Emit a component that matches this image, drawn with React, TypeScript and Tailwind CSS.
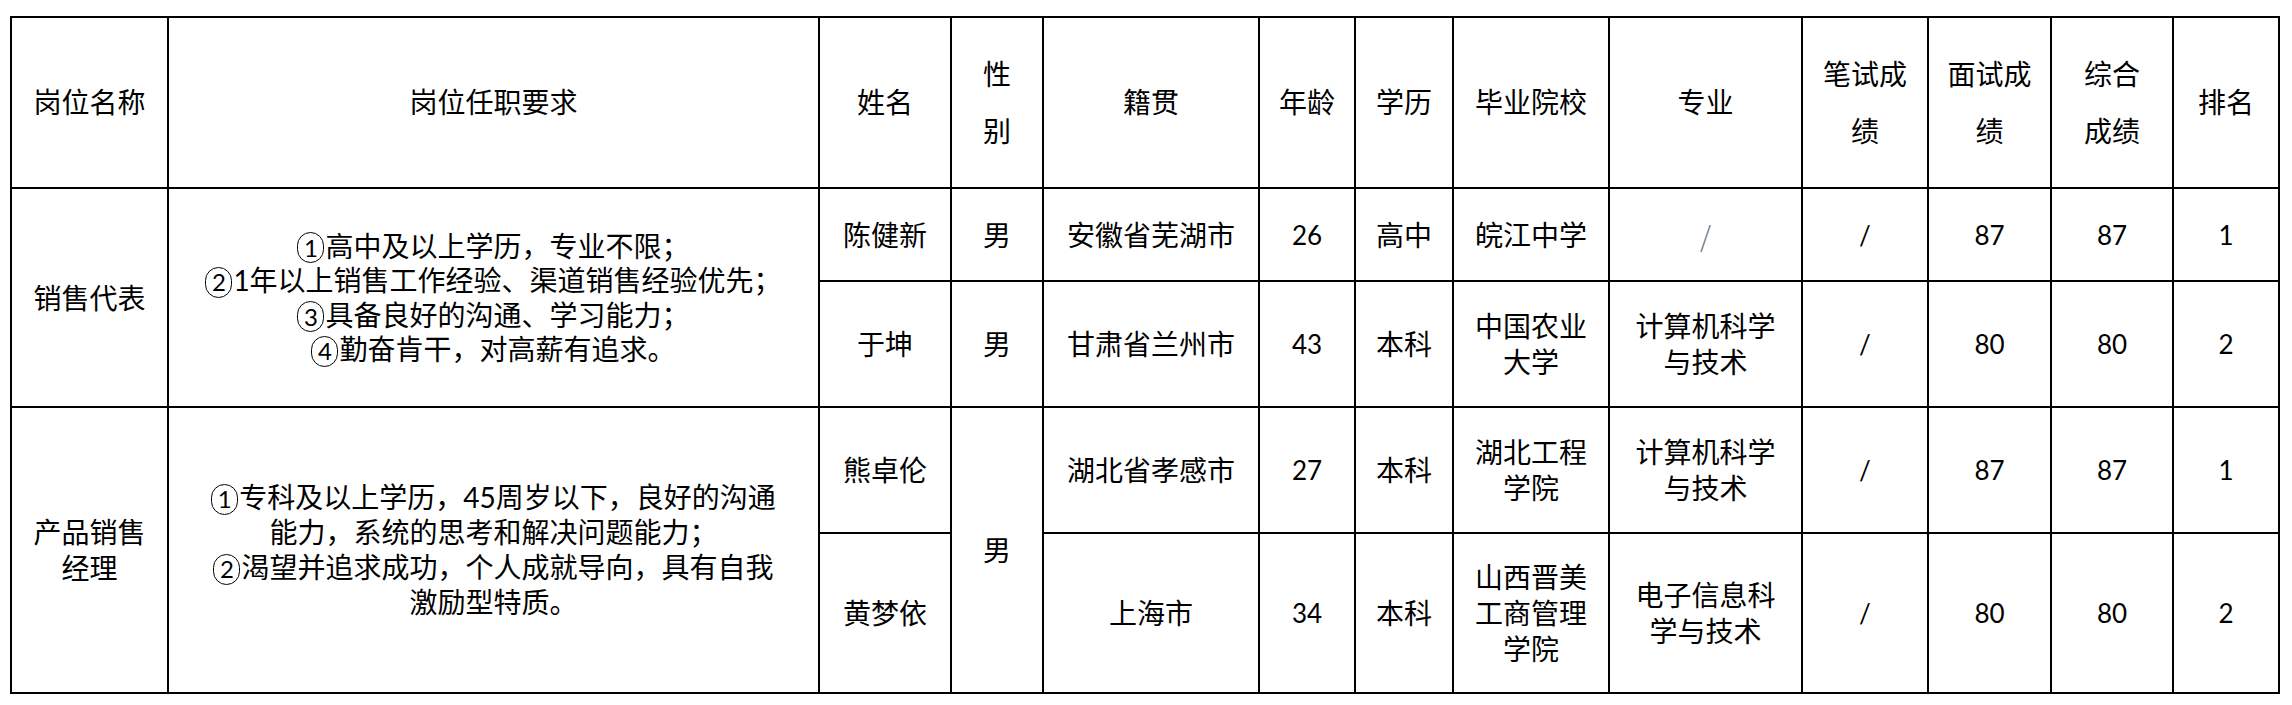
import React from 'react'

// 列宽（px），与原表一致
const colWidths = [157, 651, 132, 92, 216, 96, 98, 156, 193, 126, 123, 122, 106]

const base = "font-[Lato,'Noto_Sans_CJK_SC',sans-serif] text-black"

const circled: Record<string, string> = { '①': '1', '②': '2', '③': '3', '④': '4' }

// 带圈数字，原表里的圈比字体自带的大
function Circ({ n }: { n: string }) {
  return (
    <span className="inline-flex items-center justify-center w-[27px] h-[31px] mr-[1px] rounded-full border-[1.5px] border-black align-baseline text-[24px] leading-none">
      {n}
    </span>
  )
}

function Line({ text }: { text: string }) {
  const first = text.charAt(0)
  if (circled[first]) {
    return (
      <div className="whitespace-nowrap">
        <Circ n={circled[first]} />
        {text.slice(1)}
      </div>
    )
  }
  return <div className="whitespace-nowrap">{text}</div>
}

function Lines({ lines, leading = 'leading-[36px]' }: { lines: string[]; leading?: string }) {
  return (
    <div className={leading}>
      {lines.map((l, i) => (
        <Line key={i} text={l} />
      ))}
    </div>
  )
}

function Th({ lines }: { lines: string[] }) {
  return (
    <td className="border-2 border-black text-center align-middle p-0 text-[28px]">
      <Lines lines={lines} leading="leading-[57px]" />
    </td>
  )
}

function Td({ lines, rowSpan, num }: { lines: string[]; rowSpan?: number; num?: boolean }) {
  return (
    <td
      rowSpan={rowSpan}
      className={`border-2 border-black text-center align-middle p-0 ${num ? 'text-[26px]' : 'text-[28px]'}`}
    >
      <Lines lines={lines} />
    </td>
  )
}

export default function App() {
  return (
    <div className={`w-[2292px] h-[705px] bg-white pt-[16px] pl-[10px] ${base}`}>
      <table className="table-fixed border-collapse w-[2270px]">
        <colgroup>
          {colWidths.map((w, i) => (
            <col key={i} style={{ width: w }} />
          ))}
        </colgroup>
        <tbody>
          {/* 表头 */}
          <tr className="h-[171px]">
            <Th lines={['岗位名称']} />
            <Th lines={['岗位任职要求']} />
            <Th lines={['姓名']} />
            <Th lines={['性', '别']} />
            <Th lines={['籍贯']} />
            <Th lines={['年龄']} />
            <Th lines={['学历']} />
            <Th lines={['毕业院校']} />
            <Th lines={['专业']} />
            <Th lines={['笔试成', '绩']} />
            <Th lines={['面试成', '绩']} />
            <Th lines={['综合', '成绩']} />
            <Th lines={['排名']} />
          </tr>

          {/* 销售代表 */}
          <tr className="h-[93px]">
            <Td lines={['销售代表']} rowSpan={2} />
            <td rowSpan={2} className="border-2 border-black text-center align-middle p-0 text-[28px]">
              <Lines
                leading="leading-[34px]"
                lines={[
                  '①高中及以上学历，专业不限；',
                  '②1年以上销售工作经验、渠道销售经验优先；',
                  '③具备良好的沟通、学习能力；',
                  '④勤奋肯干，对高薪有追求。',
                ]}
              />
            </td>
            <Td lines={['陈健新']} />
            <Td lines={['男']} />
            <Td lines={['安徽省芜湖市']} />
            <Td lines={['26']} num />
            <Td lines={['高中']} />
            <Td lines={['皖江中学']} />
            <td className="border-2 border-black text-center align-middle p-0 text-[28px] font-light text-gray-500 font-['Noto_Sans_CJK_SC',sans-serif]">
              /
            </td>
            <Td lines={['/']} num />
            <Td lines={['87']} num />
            <Td lines={['87']} num />
            <Td lines={['1']} num />
          </tr>
          <tr className="h-[126px]">
            <Td lines={['于坤']} />
            <Td lines={['男']} />
            <Td lines={['甘肃省兰州市']} />
            <Td lines={['43']} num />
            <Td lines={['本科']} />
            <Td lines={['中国农业', '大学']} />
            <Td lines={['计算机科学', '与技术']} />
            <Td lines={['/']} num />
            <Td lines={['80']} num />
            <Td lines={['80']} num />
            <Td lines={['2']} num />
          </tr>

          {/* 产品销售经理 */}
          <tr className="h-[126px]">
            <Td lines={['产品销售', '经理']} rowSpan={2} />
            <td rowSpan={2} className="border-2 border-black text-center align-middle p-0 text-[28px]">
              <Lines
                leading="leading-[35px]"
                lines={[
                  '①专科及以上学历，45周岁以下，良好的沟通',
                  '能力，系统的思考和解决问题能力；',
                  '②渴望并追求成功，个人成就导向，具有自我',
                  '激励型特质。',
                ]}
              />
            </td>
            <Td lines={['熊卓伦']} />
            <Td lines={['男']} rowSpan={2} />
            <Td lines={['湖北省孝感市']} />
            <Td lines={['27']} num />
            <Td lines={['本科']} />
            <Td lines={['湖北工程', '学院']} />
            <Td lines={['计算机科学', '与技术']} />
            <Td lines={['/']} num />
            <Td lines={['87']} num />
            <Td lines={['87']} num />
            <Td lines={['1']} num />
          </tr>
          <tr className="h-[160px]">
            <Td lines={['黄梦依']} />
            <Td lines={['上海市']} />
            <Td lines={['34']} num />
            <Td lines={['本科']} />
            <Td lines={['山西晋美', '工商管理', '学院']} />
            <Td lines={['电子信息科', '学与技术']} />
            <Td lines={['/']} num />
            <Td lines={['80']} num />
            <Td lines={['80']} num />
            <Td lines={['2']} num />
          </tr>
        </tbody>
      </table>
    </div>
  )
}
